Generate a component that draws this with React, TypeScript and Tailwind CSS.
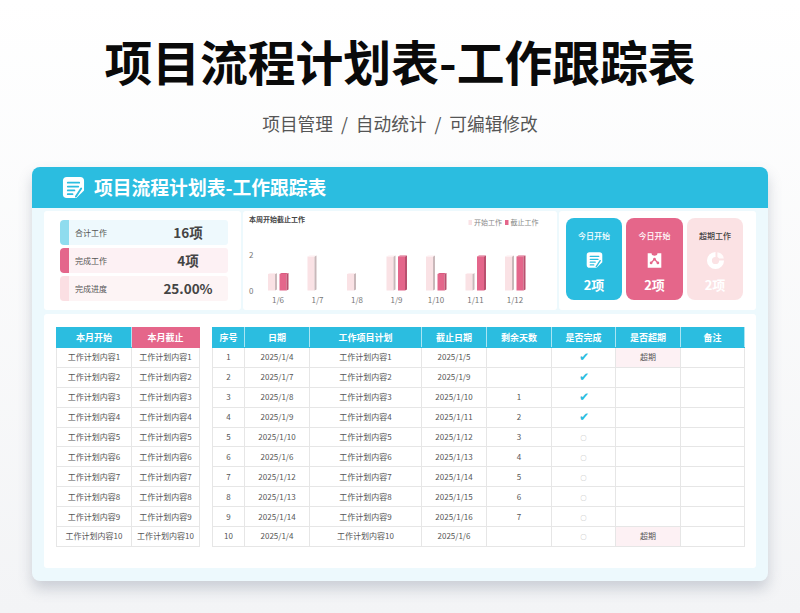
const FONT = "font-['Noto_Sans_CJK_SC','Noto_Sans',sans-serif]"

const kpis = [
    { label: '合计工作', value: '16项', accent: 'bg-[#8fdcee]', bg: 'bg-[#eef9fd]' },
    { label: '完成工作', value: '4项', accent: 'bg-[#e4668b]', bg: 'bg-[#fdf1f4]' },
    { label: '完成进度', value: '25.00%', accent: 'bg-[#fbdfe3]', bg: 'bg-[#fdf4f5]' },
]

const chartData = [
    { day: '1/6', start: 1, end: 1 },
    { day: '1/7', start: 2, end: 0 },
    { day: '1/8', start: 1, end: 0 },
    { day: '1/9', start: 2, end: 2 },
    { day: '1/10', start: 2, end: 1 },
    { day: '1/11', start: 1, end: 2 },
    { day: '1/12', start: 2, end: 2 },
]

const rows = [
    { date: '2025/1/4', due: '2025/1/5', left: '', done: true, late: true },
    { date: '2025/1/7', due: '2025/1/9', left: '', done: true, late: false },
    { date: '2025/1/8', due: '2025/1/10', left: '1', done: true, late: false },
    { date: '2025/1/9', due: '2025/1/11', left: '2', done: true, late: false },
    { date: '2025/1/10', due: '2025/1/12', left: '3', done: false, late: false },
    { date: '2025/1/6', due: '2025/1/13', left: '4', done: false, late: false },
    { date: '2025/1/12', due: '2025/1/14', left: '5', done: false, late: false },
    { date: '2025/1/13', due: '2025/1/15', left: '6', done: false, late: false },
    { date: '2025/1/14', due: '2025/1/16', left: '7', done: false, late: false },
    { date: '2025/1/4', due: '2025/1/6', left: '', done: false, late: true },
]

const headers = ['序号', '日期', '工作项目计划', '截止日期', '剩余天数', '是否完成', '是否超期', '备注']
const widths = ['w-[32px]', 'w-[65px]', 'w-[112px]', 'w-[65px]', 'w-[65px]', 'w-[64px]', 'w-[65px]', 'w-[64px]']

function NoteIcon({ className, ink }: { className: string; ink: string }) {
    return (
        <svg viewBox="0 0 24 24" className={className}>
            <path d="M5 1h14a4 4 0 0 1 4 4v10l-8 8H5a4 4 0 0 1-4-4V5a4 4 0 0 1 4-4z" fill="#fff" />
            <path d="M6 7h12M6 11h11M6 15h7M6 19h5" stroke={ink} strokeWidth="1.8" strokeLinecap="round" />
            <path d="M14.5 21.5 20 13" stroke={ink} strokeWidth="2" strokeLinecap="round" />
        </svg>
    )
}

function ClipIcon() {
    return (
        <svg viewBox="0 0 20 20" className="w-[17px] h-[18px]">
            <path d="M2 2h4.5a3.5 3 0 0 0 7 0H18v17H2z" fill="#fff" />
            <path d="M6 13.5 10 9l4 4.5" stroke="#e5668a" strokeWidth="1.6" fill="none" />
            <circle cx="6" cy="13.5" r="1.6" fill="#e5668a" />
            <circle cx="10" cy="9" r="1.6" fill="#e5668a" />
            <circle cx="14" cy="13.5" r="1.6" fill="#e5668a" />
        </svg>
    )
}

function PieIcon() {
    return (
        <svg viewBox="0 0 20 20" className="w-[19px] h-[19px]">
            <path d="M10 1a9 9 0 1 0 9 9h-5.2A3.8 3.8 0 1 1 10 6.2z" fill="#fff" />
            <path d="M12 1.2A8 8 0 0 1 18.8 8h-5a4 4 0 0 0-1.8-1.8z" fill="#fff" opacity="0.85" />
        </svg>
    )
}

function Bar({ x, value, kind }: { x: number; value: number; kind: 'start' | 'end' }) {
    if (!value) return null
    const base = 79.5
    const top = value === 2 ? 45.5 : 63
    const front = kind === 'start' ? '#fae2e5' : '#e4668b'
    const side = kind === 'start' ? '#c9b8ba' : '#b9506f'
    const lid = kind === 'start' ? '#fdeef0' : '#d95c80'
    return (
        <g>
            <rect x={x} y={top} width={7} height={base - top} fill={front} />
            <path d={`M${x + 7} ${top}l2 -1v${base - top}l-2 1z`} fill={side} />
            <path d={`M${x} ${top}l2 -1h7l-2 1z`} fill={lid} />
        </g>
    )
}

function WeekChart() {
    return (
        <svg viewBox="0 0 314 99" className="w-[314px] h-[99px]">
            <text x="6" y="11" fontSize="7" fontWeight="700" fill="#444">本周开始截止工作</text>
            <rect x="225.5" y="9" width="3.5" height="5" fill="#fae2e5" />
            <text x="231" y="14" fontSize="7" fill="#888">开始工作</text>
            <rect x="262" y="9" width="3.5" height="5" fill="#e4668b" />
            <text x="267.5" y="14" fontSize="7" fill="#888">截止工作</text>
            <text x="6" y="47" fontSize="8" fill="#777">2</text>
            <text x="6" y="83" fontSize="8" fill="#777">0</text>
            {chartData.map((d, i) => {
                const x = 25 + i * 39.5
                return (
                    <g key={d.day}>
                        <Bar x={x} value={d.start} kind="start" />
                        <Bar x={x + 11.5} value={d.end} kind="end" />
                        <text x={x + 10} y="92" fontSize="8" fill="#777" textAnchor="middle">{d.day}</text>
                    </g>
                )
            })}
        </svg>
    )
}

export default function App() {
    return (
        <div className={`${FONT} w-[800px] h-[613px] overflow-hidden bg-gradient-to-b from-white to-[#f3f4f6] flex flex-col items-center`}>
            <h1 className="mt-[26px] h-[70px] leading-[70px] text-[47.8px] font-bold text-[#0a0a0a] whitespace-nowrap">项目流程计划表-工作跟踪表</h1>
            <p className="mt-[15px] h-[25px] leading-[25px] text-[17.7px] text-[#555] whitespace-pre">项目管理  /  自动统计  /  可编辑修改</p>

            <div className="mt-[31px] w-[736px] h-[414px] rounded-[8px] bg-[#edf9fd] shadow-[0_8px_14px_rgba(110,120,140,0.3)] overflow-hidden flex flex-col">
                <div className="h-[41px] shrink-0 bg-[#2bbde0] flex items-center pl-[30px] gap-[9px]">
                    <NoteIcon className="w-[23px] h-[23px]" ink="#2bbde0" />
                    <span className="text-[18.8px] font-bold text-white whitespace-nowrap">项目流程计划表-工作跟踪表</span>
                </div>

                <div className="flex-1 flex flex-col px-[12px] pt-[3px] pb-[13px] gap-[4px]">
                    <div className="h-[99px] flex gap-[2px]">
                        <div className="w-[197px] bg-white rounded-[3px] pl-[16px] pt-[9px] flex flex-col gap-[3px]">
                            {kpis.map(k => (
                                <div key={k.label} className={`w-[168px] h-[25px] flex items-center rounded-[3px] overflow-hidden ${k.bg}`}>
                                    <div className={`w-[9px] h-full rounded-l-[4px] ${k.accent}`} />
                                    <span className="ml-[6px] w-[73px] text-[8px] text-[#555]">{k.label}</span>
                                    <span className="w-[80px] text-center text-[13.5px] font-bold text-[#444]">{k.value}</span>
                                </div>
                            ))}
                        </div>
                        <div className="w-[314px] bg-white rounded-[3px]">
                            <WeekChart />
                        </div>
                        <div className="flex-1 bg-white rounded-[3px] pl-[7px] pt-[7px] flex gap-[4px]">
                            <div className="w-[56px] h-[82px] rounded-[8px] bg-[#2bbde0] flex flex-col items-center pt-[11px]">
                                <span className="text-[8px] leading-[14px] font-medium text-white">今日开始</span>
                                <NoteIcon className="w-[17px] h-[18px] mt-[8px]" ink="#2bbde0" />
                                <span className="mt-[7px] text-[13px] leading-[18px] font-bold text-white">2项</span>
                            </div>
                            <div className="w-[57px] h-[82px] rounded-[8px] bg-[#e5668a] flex flex-col items-center pt-[11px]">
                                <span className="text-[8px] leading-[14px] font-medium text-white">今日开始</span>
                                <div className="mt-[8px]"><ClipIcon /></div>
                                <span className="mt-[7px] text-[13px] leading-[18px] font-bold text-white">2项</span>
                            </div>
                            <div className="w-[56px] h-[82px] rounded-[8px] bg-[#fbe2e4] flex flex-col items-center pt-[11px]">
                                <span className="text-[8px] leading-[14px] font-medium text-[#444]">超期工作</span>
                                <div className="mt-[8px]"><PieIcon /></div>
                                <span className="mt-[6px] text-[13px] leading-[18px] font-bold text-white">2项</span>
                            </div>
                        </div>
                    </div>

                    <div className="flex-1 bg-white rounded-[3px] pl-[12px] pt-[13px] flex gap-[12px] items-start">
                        <table className="table-fixed border-collapse w-[143px] text-[8px] text-[#555]">
                            <thead>
                                <tr className="h-[20px] text-[9px] font-bold text-white">
                                    <th className="w-[75px] bg-[#2bbde0] border border-[#2bbde0] border-r-white/60">本月开始</th>
                                    <th className="w-[68px] bg-[#e5668a] border border-[#e5668a]">本月截止</th>
                                </tr>
                            </thead>
                            <tbody>
                                {rows.map((_, i) => (
                                    <tr key={i} className="h-[19.9px]">
                                        <td className="border border-[#e6e6e6] text-center p-0 whitespace-nowrap">工作计划内容{i + 1}</td>
                                        <td className="border border-[#e6e6e6] text-center p-0 whitespace-nowrap">工作计划内容{i + 1}</td>
                                    </tr>
                                ))}
                            </tbody>
                        </table>

                        <table className="table-fixed border-collapse w-[533px] text-[8px] text-[#555]">
                            <thead>
                                <tr className="h-[20px] text-[9px] font-bold text-white bg-[#2bbde0]">
                                    {headers.map((h, i) => (
                                        <th key={h} className={`${widths[i]} border border-[#2bbde0] border-r-white/60 p-0`}>{h}</th>
                                    ))}
                                </tr>
                            </thead>
                            <tbody>
                                {rows.map((r, i) => (
                                    <tr key={i} className="h-[19.9px] text-center">
                                        <td className="border border-[#e6e6e6] p-0">{i + 1}</td>
                                        <td className="border border-[#e6e6e6] p-0">{r.date}</td>
                                        <td className="border border-[#e6e6e6] p-0">工作计划内容{i + 1}</td>
                                        <td className="border border-[#e6e6e6] p-0">{r.due}</td>
                                        <td className="border border-[#e6e6e6] p-0">{r.left}</td>
                                        <td className="border border-[#e6e6e6] p-0">
                                            {r.done
                                                ? <span className="text-[12px] leading-none text-[#2bbde0]">✔</span>
                                                : <span className="text-[6px] text-[#aaa]">○</span>}
                                        </td>
                                        <td className={`border border-[#e6e6e6] p-0 ${r.late ? 'bg-[#fdf1f4]' : ''}`}>{r.late ? '超期' : ''}</td>
                                        <td className="border border-[#e6e6e6] p-0" />
                                    </tr>
                                ))}
                            </tbody>
                        </table>
                    </div>
                </div>
            </div>
        </div>
    )
}
